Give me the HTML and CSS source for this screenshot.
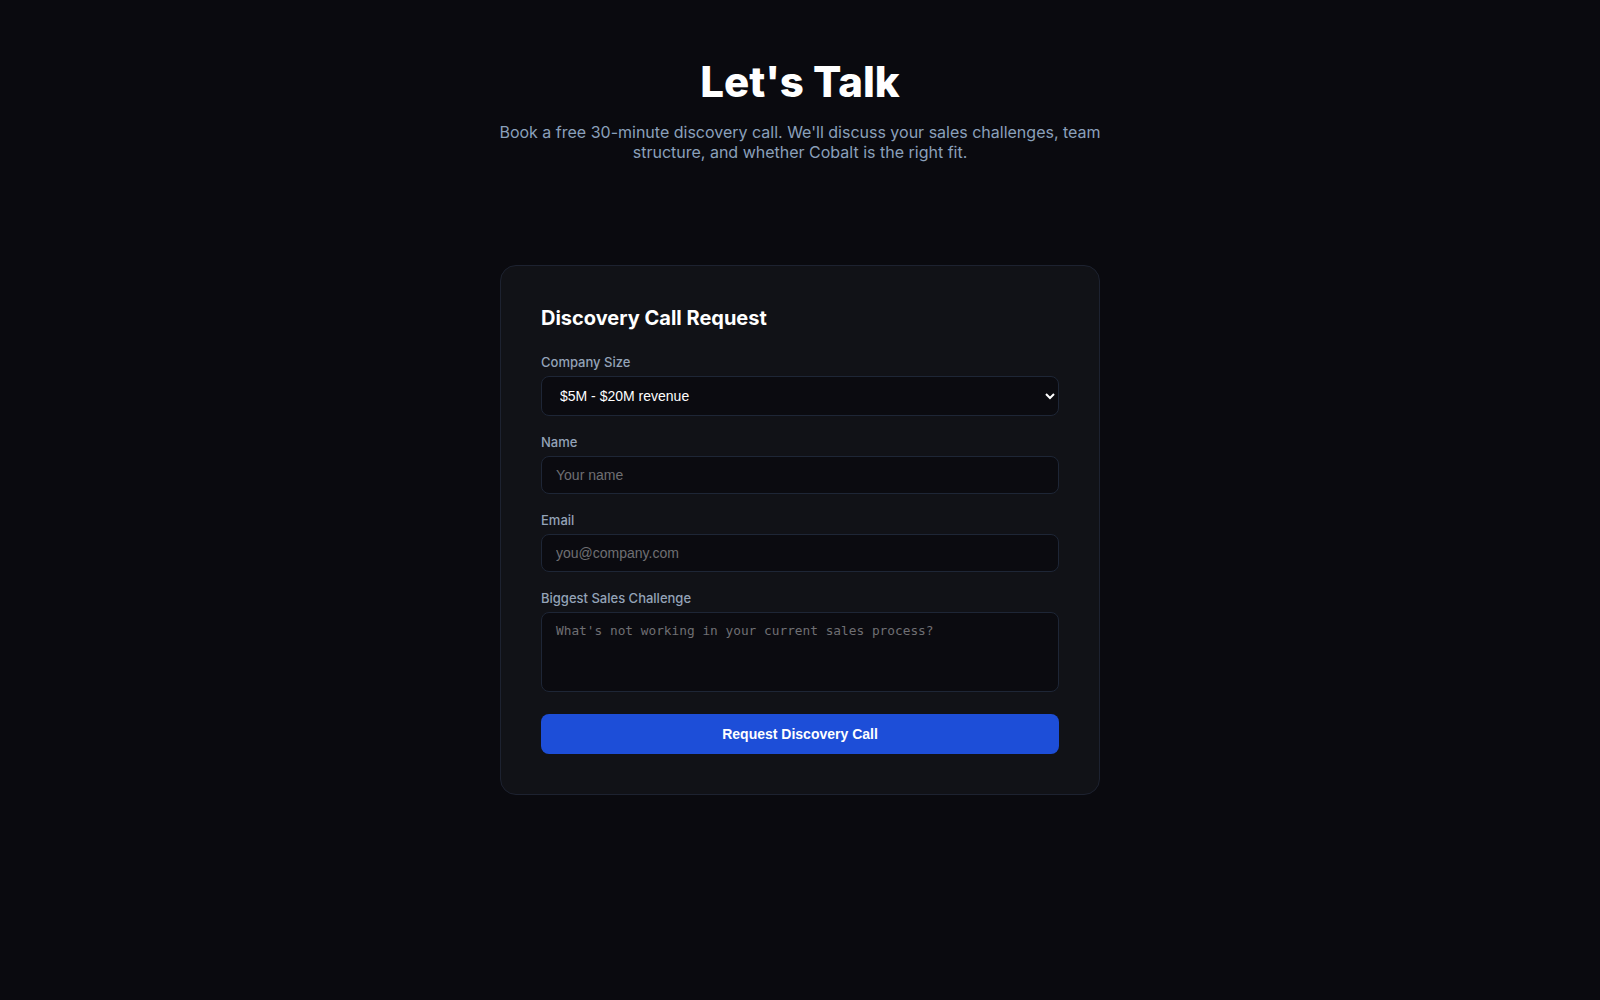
FILE: index.html
```html
<!DOCTYPE html>
<html lang="en">
<head>
<meta charset="utf-8">
<title>Let's Talk — Cobalt</title>
<link rel="stylesheet" href="styles.css">
</head>
<body>
  <header class="intro">
    <h1 class="intro-title">Let's Talk</h1>
    <p class="intro-text">Book a free 30-minute discovery call. We'll discuss your sales challenges, team structure, and whether Cobalt is the right fit.</p>
  </header>

  <main class="contact">
    <form class="card" action="#" onsubmit="return false">
      <h2 class="card-title">Discovery Call Request</h2>

      <div class="field">
        <label class="field-label" for="size">Company Size</label>
        <select class="control control-select" id="size" name="size">
          <option>Under $5M revenue</option>
          <option selected>$5M - $20M revenue</option>
          <option>$20M - $100M revenue</option>
          <option>$100M+ revenue</option>
        </select>
      </div>

      <div class="field">
        <label class="field-label" for="name">Name</label>
        <input class="control" id="name" name="name" type="text" placeholder="Your name">
      </div>

      <div class="field">
        <label class="field-label" for="email">Email</label>
        <input class="control" id="email" name="email" type="email" placeholder="you@company.com">
      </div>

      <div class="field field-last">
        <label class="field-label" for="challenge">Biggest Sales Challenge</label>
        <textarea class="control control-area" id="challenge" name="challenge" placeholder="What's not working in your current sales process?"></textarea>
      </div>

      <button class="submit" type="submit">Request Discovery Call</button>
    </form>
  </main>
</body>
</html>
```

FILE: styles.css
```css
* {
  box-sizing: border-box;
}

html {
  background: #0a0a0f;
}

body {
  margin: 0;
  min-height: 1000px;
  background: #0a0a0f;
  color: #ffffff;
  font-family: Inter, "Noto Sans", sans-serif;
}

/* Page heading */
.intro {
  padding-top: 56px;
  text-align: center;
}

.intro-title {
  margin: 0;
  font-size: 42px;
  font-weight: 800;
  line-height: normal;
  color: #ffffff;
}

.intro-text {
  max-width: 640px;
  margin: 15px auto 0;
  font-size: 16px;
  line-height: normal;
  color: #8aa0bb;
}

/* Form card */
.contact {
  display: flex;
  justify-content: center;
  padding-top: 103px;
}

.card {
  width: 600px;
  padding: 40px;
  background: #111217;
  border: 1px solid #1d2230;
  border-radius: 16px;
}

.card-title {
  margin: 0 0 24px;
  font-size: 20px;
  font-weight: 700;
  line-height: normal;
  color: #ffffff;
}

.field {
  margin-bottom: 18px;
}

.field-last {
  margin-bottom: 22px;
}

.field-label {
  display: block;
  margin-bottom: 6px;
  font-size: 13px;
  font-weight: 500;
  line-height: normal;
  color: #94a3b8;
}

.control {
  display: block;
  width: 100%;
  padding: 10px 14px;
  background: #0b0b10;
  border: 1px solid #1e2636;
  border-radius: 8px;
  color: #ffffff;
  font-family: "Liberation Sans", Arial, sans-serif;
  font-size: 14px;
  outline: none;
}

.control::placeholder {
  color: #6f6f73;
}

.control-select {
  color-scheme: dark;
  padding-right: 8px;
}

.control-area {
  height: 80px;
  resize: none;
  font-family: "DejaVu Sans Mono", "Liberation Mono", monospace;
  font-size: 12.8px;
}

.submit {
  display: block;
  width: 100%;
  height: 40px;
  border: 0;
  border-radius: 8px;
  background: #1d4ed8;
  color: #ffffff;
  font-family: "Liberation Sans", Arial, sans-serif;
  font-size: 14px;
  font-weight: 700;
  cursor: pointer;
}
```
